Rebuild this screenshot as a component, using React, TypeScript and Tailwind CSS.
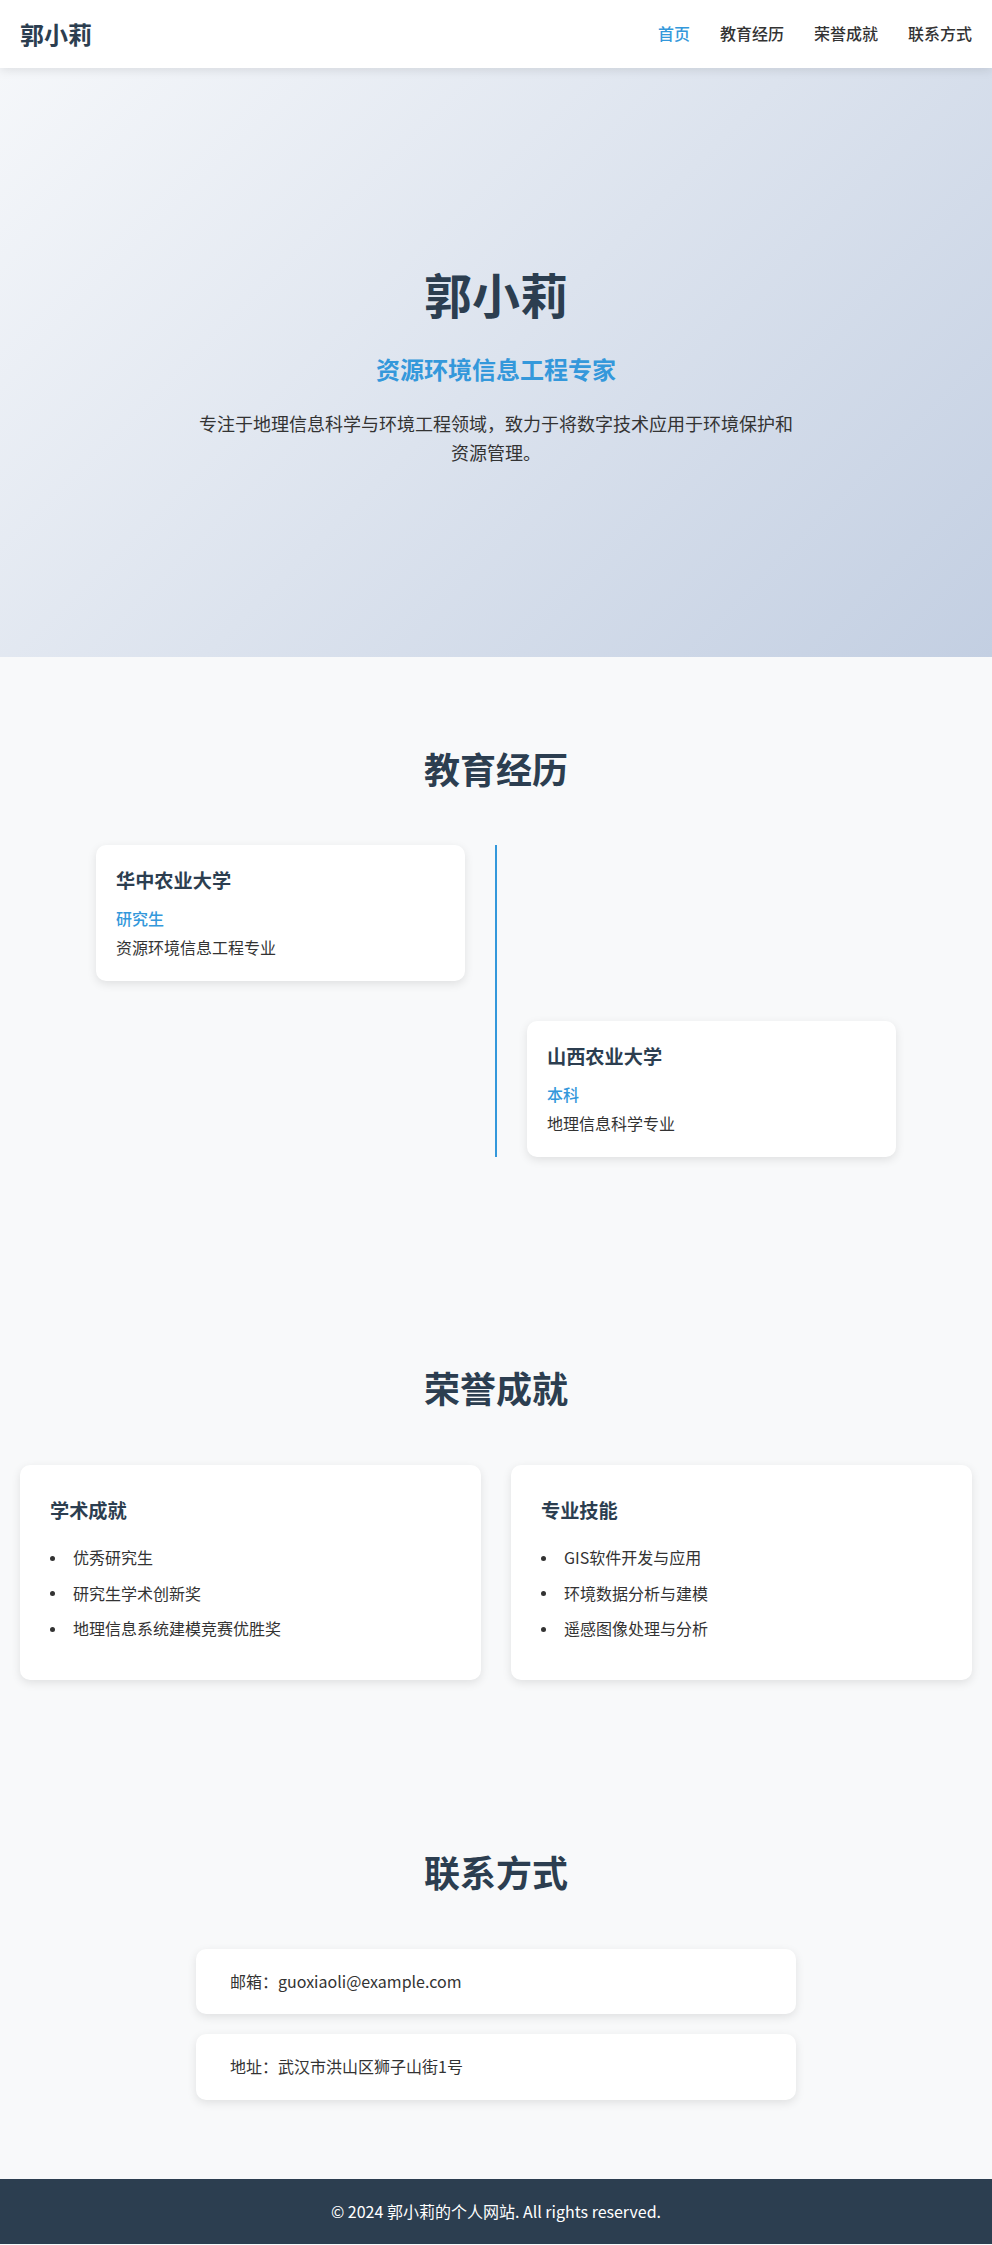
const font = { fontFamily: '"Noto Sans CJK SC", "Noto Sans", sans-serif' }

const education = [
  { school: '华中农业大学', degree: '研究生', major: '资源环境信息工程专业' },
  { school: '山西农业大学', degree: '本科', major: '地理信息科学专业' },
]

const honors = [
  { title: '学术成就', items: ['优秀研究生', '研究生学术创新奖', '地理信息系统建模竞赛优胜奖'] },
  { title: '专业技能', items: ['GIS软件开发与应用', '环境数据分析与建模', '遥感图像处理与分析'] },
]

function EduCard({ school, degree, major }: { school: string; degree: string; major: string }) {
  return (
    <div className="bg-white rounded-[10px] p-[20px] shadow-[0_3px_10px_rgba(0,0,0,0.1)]">
      <h3 className="text-[19.2px] font-bold leading-[1.6] text-[#2c3e50] mb-[10px]">{school}</h3>
      <p className="text-[16px] leading-[1.6] font-medium text-[#3498db] mb-[4px]">{degree}</p>
      <p className="text-[16px] leading-[1.6] text-[#333]">{major}</p>
    </div>
  )
}

function SectionTitle({ children }: { children: string }) {
  return (
    <h2 className="text-center text-[36px] font-bold leading-[1.6] text-[#2c3e50] mb-[48px]">{children}</h2>
  )
}

export default function App() {
  return (
    <div className="min-h-screen bg-[#f8f9fa] text-[#333]" style={font}>
      <header className="relative z-10 bg-white shadow-[0_2px_10px_rgba(0,0,0,0.1)]">
        <div className="px-[20px] py-[16px] flex items-center justify-between">
          <span className="text-[24px] leading-[36px] font-bold text-[#2c3e50]">郭小莉</span>
          <nav className="flex items-center gap-[30px] text-[16px] leading-[1.6] font-medium">
            <a className="text-[#3498db]">首页</a>
            <a className="text-[#333]">教育经历</a>
            <a className="text-[#333]">荣誉成就</a>
            <a className="text-[#333]">联系方式</a>
          </nav>
        </div>
      </header>

      <section className="bg-[linear-gradient(135deg,#f5f7fa_0%,#c3cfe2_100%)] pt-[197px] pb-[190px] px-[20px] text-center">
        <h1 className="text-[48px] leading-[1.2] font-bold text-[#2c3e50] mb-[27px]">郭小莉</h1>
        <h2 className="text-[24px] leading-[1.6] font-bold text-[#3498db] mb-[21px]">资源环境信息工程专家</h2>
        <p className="max-w-[600px] mx-auto text-[18px] leading-[1.6] text-[#333]">
          专注于地理信息科学与环境工程领域，致力于将数字技术应用于环境保护和资源管理。
        </p>
      </section>

      <section className="pt-[83px] pb-[119px] px-[20px]">
        <SectionTitle>教育经历</SectionTitle>
        <div className="max-w-[800px] mx-auto grid grid-cols-[1fr_2px_1fr] gap-x-[30px] gap-y-[40px]">
          <div className="col-start-1 row-start-1">
            <EduCard {...education[0]} />
          </div>
          <div className="col-start-2 row-start-1 row-span-2 bg-[#3498db]" />
          <div className="col-start-3 row-start-2">
            <EduCard {...education[1]} />
          </div>
        </div>
      </section>

      <section className="pt-[83px] pb-[80px] px-[20px]">
        <SectionTitle>荣誉成就</SectionTitle>
        <div className="grid grid-cols-2 gap-[30px]">
          {honors.map((h) => (
            <div key={h.title} className="bg-white rounded-[10px] pt-[30px] px-[30px] pb-[33px] shadow-[0_3px_10px_rgba(0,0,0,0.1)]">
              <h3 className="text-[19.2px] font-bold leading-[1.6] text-[#2c3e50] mb-[15px]">{h.title}</h3>
              <ul>
                {h.items.map((item) => (
                  <li key={item} className="flex items-center py-[5px] text-[16px] leading-[1.6] text-[#333]">
                    <span className="w-[5px] h-[5px] rounded-full bg-[#333] mr-[18px] shrink-0" />
                    {item}
                  </li>
                ))}
              </ul>
            </div>
          ))}
        </div>
      </section>

      <section className="pt-[83px] pb-[79px] px-[20px]">
        <SectionTitle>联系方式</SectionTitle>
        <div className="max-w-[600px] mx-auto flex flex-col gap-[20px]">
          <div className="bg-white rounded-[10px] py-[20px] pl-[34px] pr-[20px] text-[16px] leading-[1.6] text-[#333] shadow-[0_3px_10px_rgba(0,0,0,0.1)]">
            邮箱：guoxiaoli@example.com
          </div>
          <div className="bg-white rounded-[10px] py-[20px] pl-[34px] pr-[20px] text-[16px] leading-[1.6] text-[#333] shadow-[0_3px_10px_rgba(0,0,0,0.1)]">
            地址：武汉市洪山区狮子山街1号
          </div>
        </div>
      </section>

      <footer className="bg-[#2c3e50] py-[20px] text-center text-white text-[16px] leading-[1.6]">
        © 2024 郭小莉的个人网站. All rights reserved.
      </footer>
    </div>
  )
}
